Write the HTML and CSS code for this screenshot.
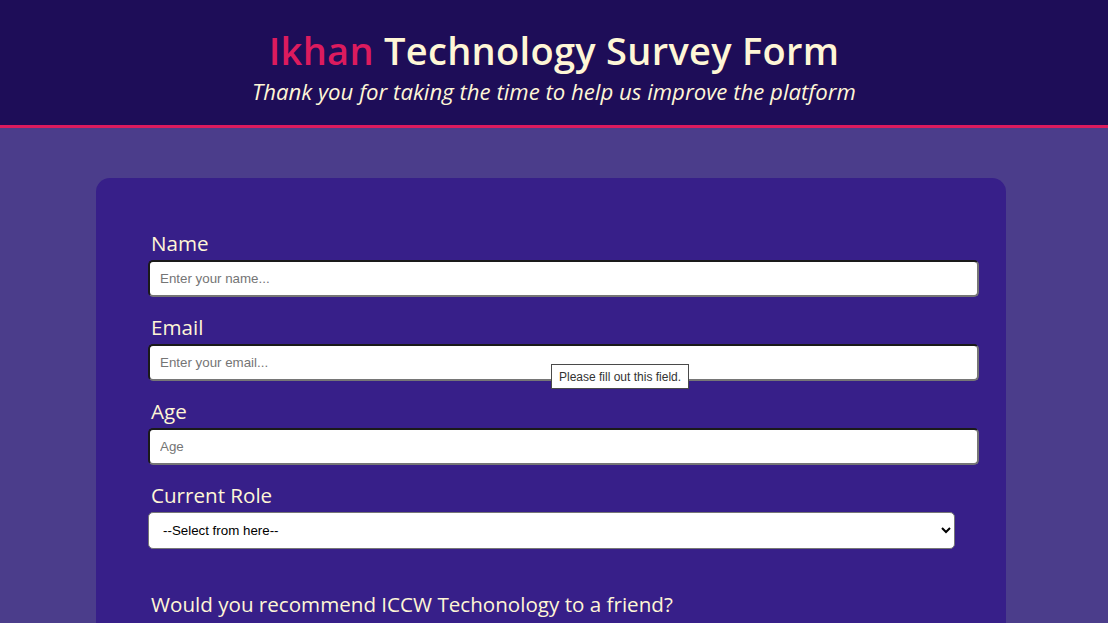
FILE: index.html
```html
<!DOCTYPE html>
<html lang="en">
<head>
<meta charset="utf-8">
<title>Ikhan Technology Survey Form</title>
<link rel="stylesheet" href="styles.css">
</head>
<body>
<header class="site-header">
  <h1 class="title"><span class="brand">Ikhan</span> Technology Survey Form</h1>
  <p class="subtitle">Thank you for taking the time to help us improve the platform</p>
</header>
<main class="card">
  <form class="survey">
    <div class="group">
      <label class="label" for="name">Name</label>
      <input class="text-input" id="name" type="text" placeholder="Enter your name..." required>
    </div>
    <div class="group">
      <label class="label" for="email">Email</label>
      <div class="field">
        <input class="text-input" id="email" type="email" placeholder="Enter your email..." required>
        <div class="tooltip">Please fill out this field.</div>
      </div>
    </div>
    <div class="group">
      <label class="label" for="age">Age</label>
      <input class="text-input" id="age" type="number" placeholder="Age">
    </div>
    <div class="group">
      <label class="label" for="role">Current Role</label>
      <select class="select" id="role">
        <option>--Select from here--</option>
        <option>Student</option>
        <option>Full Time Job</option>
        <option>Prefer not to say</option>
      </select>
    </div>
    <div class="question">
      <p class="question-title">Would you recommend ICCW Techonology to a friend?</p>
    </div>
  </form>
</main>
</body>
</html>
```
FILE: styles.css
```css
html, body {
  margin: 0;
  padding: 0;
}
body {
  background: #4b3d8b;
  font-family: "Open Sans", "Lato", sans-serif;
  color: #fff6d6;
  overflow: hidden;
}
.site-header {
  box-sizing: border-box;
  height: 128px;
  padding-top: 28px;
  background: #1e0d58;
  border-bottom: 3px solid #dc1b5e;
  text-align: center;
}
.title {
  margin: 0;
  font-size: 38px;
  line-height: 44px;
  letter-spacing: 0.3px;
  font-weight: 600;
  color: #fff6d6;
}
.brand {
  color: #dc1b5e;
}
.subtitle {
  margin: 6px 0 0;
  font-size: 22.2px;
  line-height: 28px;
  font-style: italic;
}
.card {
  box-sizing: border-box;
  width: 910px;
  margin: 50px 0 0 96px;
  padding: 53px 51px 200px 52px;
  background: #371f89;
  border-radius: 14px;
}
.group {
  margin-bottom: 18px;
}
.label {
  display: block;
  margin: 0 0 5px 3px;
  font-size: 20.6px;
  line-height: 24px;
}
.field {
  position: relative;
}
.text-input {
  display: block;
  width: 100%;
  height: 33px;
  margin: 0;
  padding: 0 10px;
  border: 2px solid;
  border-color: #1a1a1a #767676 #767676 #1a1a1a;
  border-radius: 5px;
  background: #fff;
  font-family: "Liberation Sans", Arial, sans-serif;
  font-size: 13.333px;
  color: #000;
}
.text-input::placeholder {
  color: #757575;
}
.select {
  display: block;
  box-sizing: border-box;
  width: 100%;
  height: 37px;
  margin: 0;
  padding: 0 10px;
  border: 1px solid #767676;
  border-radius: 5px;
  background: #fff;
  font-family: "Liberation Sans", Arial, sans-serif;
  font-size: 13.333px;
  color: #000;
}
.tooltip {
  position: absolute;
  top: 20px;
  left: 403px;
  box-sizing: border-box;
  width: 138px;
  height: 25px;
  padding: 0 7px;
  border: 1px solid #4a4a4a;
  background: #fff;
  color: #333;
  font-family: "Liberation Sans", Arial, sans-serif;
  font-size: 12px;
  line-height: 24px;
  white-space: nowrap;
}
.question {
  margin-top: 43px;
}
.question-title {
  margin: 0 0 0 3px;
  font-size: 20.6px;
  line-height: 24px;
}
```
